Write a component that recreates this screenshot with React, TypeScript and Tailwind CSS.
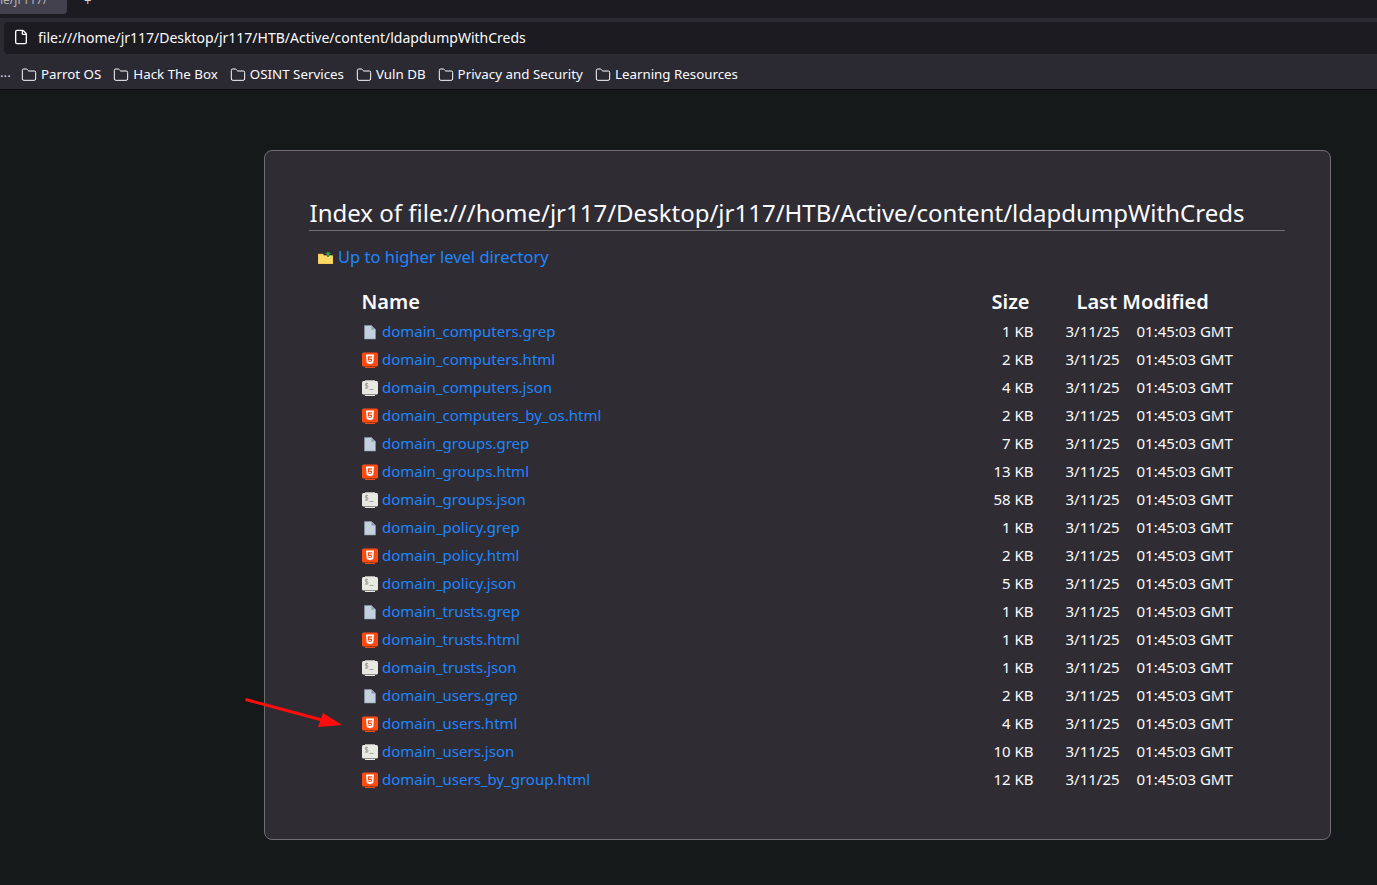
import { Folder, File } from 'lucide-react';

const rows: [string, string, string][] = [
  ['domain_computers.grep', '1 KB', 'txt'],
  ['domain_computers.html', '2 KB', 'html'],
  ['domain_computers.json', '4 KB', 'term'],
  ['domain_computers_by_os.html', '2 KB', 'html'],
  ['domain_groups.grep', '7 KB', 'txt'],
  ['domain_groups.html', '13 KB', 'html'],
  ['domain_groups.json', '58 KB', 'term'],
  ['domain_policy.grep', '1 KB', 'txt'],
  ['domain_policy.html', '2 KB', 'html'],
  ['domain_policy.json', '5 KB', 'term'],
  ['domain_trusts.grep', '1 KB', 'txt'],
  ['domain_trusts.html', '1 KB', 'html'],
  ['domain_trusts.json', '1 KB', 'term'],
  ['domain_users.grep', '2 KB', 'txt'],
  ['domain_users.html', '4 KB', 'html'],
  ['domain_users.json', '10 KB', 'term'],
  ['domain_users_by_group.html', '12 KB', 'html'],
];

const bookmarks = ['Parrot OS', 'Hack The Box', 'OSINT Services', 'Vuln DB', 'Privacy and Security', 'Learning Resources'];

function FileIcon({ kind }: { kind: string }) {
  if (kind === 'txt') {
    return (
      <svg width="16" height="16" viewBox="0 0 16 16" className="shrink-0 translate-y-px">
        <path d="M2.500 1.500h7L13.500 5.500v9.500H2.500z" fill="#c3d0de" stroke="#8d9aa8" strokeWidth="0.6" />
        <path d="M9.500 1.500v4h4z" fill="#8d9aa8" />
      </svg>
    );
  }
  if (kind === 'html') {
    return (
      <svg width="16" height="16" viewBox="0 0 16 16" className="shrink-0 translate-y-px">
        <rect x="0" y="0.500" width="16" height="14" rx="1.500" fill="#ff4a10" />
        <rect x="3" y="15" width="10" height="1" fill="#ff4a10" />
        <path d="M4 2.500h8l-.7 8.500L8 12.300 4.700 11z" fill="#fff" />
        <path d="M5.800 4.300h4.400v1.100H7l.1 1.300h3l-.3 2.800L8 10.100l-1.800-.6-.1-1.100h1.100l.1.500.7.200.8-.200.1-1H6z" fill="#ff4a10" />
      </svg>
    );
  }
  return (
    <svg width="16" height="16" viewBox="0 0 16 16" className="shrink-0 translate-y-px">
      <rect x="0" y="1" width="16" height="13.500" rx="1.500" fill="#e9e9e4" />
      <rect x="3" y="0" width="10" height="0.700" fill="#e9e9e4" />
      <rect x="3" y="15" width="10" height="1" fill="#e9e9e4" />
      <path d="M6 3.500H3.500v2.200h2.300v2.300H3M4.600 2.500v6.500" stroke="#a5a5a0" strokeWidth="1" fill="none" />
      <path d="M7.500 9.500h4" stroke="#a5a5a0" strokeWidth="1" />
    </svg>
  );
}

export default function App() {
  return (
    <div className="relative h-[885px] overflow-hidden bg-[#15191a] font-['Noto_Sans',sans-serif] text-[#fbfbfe]">
      {/* ブラウザの枠 */}
      <div className="h-[90px] border-b border-[#0c0c0d] bg-[#2b2a33]">
        <div className="flex h-[18px] items-start overflow-hidden bg-[#1c1b22]">
          <div className="h-[14px] w-[67px] overflow-hidden rounded-br bg-[#42414d] text-[12px] leading-[0px] text-[#b4b4b9]">
            ie/jr117/
          </div>
          <div className="ml-[17px] text-[13px] leading-[0px] text-[#d8d8dc]">+</div>
        </div>
        <div className="ml-1 mt-1 flex h-[32px] items-center rounded-l bg-[#1c1b22] pl-[9px] pb-[2px] text-[14px]">
          <File size={16} strokeWidth={2} />
          <span className="ml-[9px]">file:///home/jr117/Desktop/jr117/HTB/Active/content/ldapdumpWithCreds</span>
        </div>
        <div className="flex h-[35px] items-center pt-[7px] text-[13.330px]">
          <span className="w-[21px] pb-1 text-[#d8d8dc]">...</span>
          {bookmarks.map((b) => (
            <span key={b} className="mr-[12px] flex items-center gap-[4px]">
              <Folder size={16} strokeWidth={1.5} />
              {b}
            </span>
          ))}
        </div>
      </div>

      <div className="ml-[264px] mr-[46px] mt-[60px] h-[690px] rounded-lg border border-[#6e6d72] bg-[#2f2d33] pl-11 pr-[45px] pt-[32px]">
        <h1 className="h-[48px] border-b border-[#6e6d72] pt-[6px] text-[24px] leading-[47px]">
          <span className="block h-[41px] pl-[0.500px]">Index of file:///home/jr117/Desktop/jr117/HTB/Active/content/ldapdumpWithCreds</span>
        </h1>
        <div className="ml-[9px] mt-[13px] flex items-center gap-[5px] text-[16.500px] leading-[26px] text-[#1f85ff]">
          <svg width="15" height="13" viewBox="0 0 15 13">
            <path d="M0 3h5l1 1.500h9V13H0z" fill="#ffd966" stroke="#d9a93a" strokeWidth="0.500" />
            <path d="M10 0.500l3 2.500h-2v3H9V3H7z" fill="#1fa84f" />
          </svg>
          Up to higher level directory
        </div>
        <div className="ml-[52.500px] mt-[15px] w-[880px]">
          <div className="flex h-[32px] items-center pt-[2px] text-[20px] font-semibold">
            <span className="w-[630px]">Name</span>
            <span className="w-[85px]">Size</span>
            <span>Last Modified</span>
          </div>
          {rows.map(([name, size, kind]) => (
            <div key={name} className="flex h-[28px] items-center text-[15px]">
              <span className="flex w-[601px] items-center gap-[4.500px] text-[#1f85ff]">
                <FileIcon kind={kind} />
                {name}
              </span>
              <span className="w-[71px] text-right">{size}</span>
              <span className="ml-[32px] w-[71px]">3/11/25</span>
              <span>01:45:03 GMT</span>
            </div>
          ))}
        </div>
      </div>

      {/* 注釈の矢印 */}
      <svg className="absolute left-[240px] top-[690px]" width="110" height="50" viewBox="0 0 110 50">
        <path d="M5.500 9.500L82 30" stroke="#ff0d0d" strokeWidth="3" />
        <path d="M83 23L102 35L78 37z" fill="#ff0d0d" />
      </svg>
    </div>
  );
}
